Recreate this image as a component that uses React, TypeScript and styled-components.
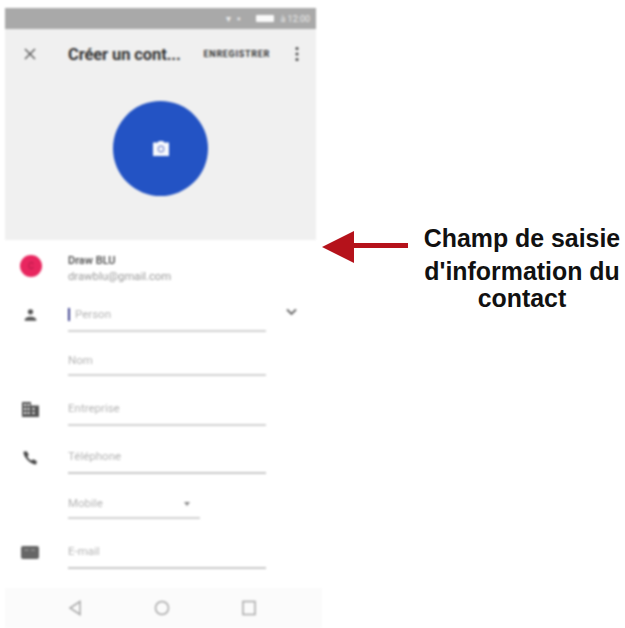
import React from "react";
import styled, { createGlobalStyle } from "styled-components";

const GlobalStyle = createGlobalStyle`
  html, body {
    margin: 0;
    padding: 0;
    background: #fff;
    font-family: "Roboto", "Liberation Sans", sans-serif;
  }
`;

const Page = styled.div`
  display: flex;
  align-items: flex-start;
  width: 625px;
  height: 628px;
  padding: 8px 0 0 5px;
  box-sizing: border-box;
  overflow: hidden;
`;

const Phone = styled.div`
  width: 311px;
  flex: none;
  filter: blur(1px);
`;

const StatusBar = styled.div`
  height: 21px;
  background: #a9a9a9;
  display: flex;
  align-items: center;
  justify-content: flex-end;
  gap: 6px;
  padding-right: 6px;
  color: #ececec;
  font-size: 9px;
`;

const StatusGlyph = styled.span`
  font-size: 10px;
`;

const Battery = styled.span`
  width: 18px;
  height: 7px;
  background: #fafafa;
  border-radius: 1px;
  margin-left: 10px;
`;

const Hero = styled.div`
  height: 211px;
  background: #f0f0f0;
  display: flex;
  flex-direction: column;
`;

const Toolbar = styled.div`
  height: 50px;
  display: flex;
  align-items: center;
  padding: 0 17px 0 18px;
`;

const Title = styled.div`
  margin-left: 31px;
  font-size: 16.5px;
  font-weight: 700;
  color: #333;
  white-space: nowrap;
  letter-spacing: -0.1px;
`;

const Save = styled.div`
  margin-left: auto;
  margin-right: 25px;
  font-size: 9px;
  font-weight: 700;
  color: #333;
  letter-spacing: 0.7px;
`;

const Photo = styled.div`
  width: 95px;
  height: 95px;
  margin: 22px auto 0;
  border-radius: 50%;
  background: #2353c4;
  display: flex;
  align-items: center;
  justify-content: center;
`;

const Account = styled.div`
  height: 51px;
  display: flex;
  align-items: center;
  gap: 26px;
  padding-left: 15px;
`;

const Avatar = styled.div`
  width: 22px;
  height: 22px;
  border-radius: 50%;
  background: #e8265f;
  display: flex;
  align-items: center;
  justify-content: center;
  color: #b01a48;
  font-size: 9px;
`;

const AccountText = styled.div`
  display: flex;
  flex-direction: column;
  gap: 3px;
  margin-top: 5px;
`;

const AccountName = styled.div`
  font-size: 11px;
  font-weight: 500;
  color: #444;
`;

const AccountMail = styled.div`
  font-size: 11.3px;
  color: #999;
`;

const Row = styled.div<{ $height: number }>`
  height: ${(p) => p.$height}px;
  display: flex;
  align-items: flex-end;
`;

const IconSlot = styled.div`
  width: 50px;
  height: 18px;
  flex: none;
  margin: 0 13px 8px 0;
  display: flex;
  align-items: center;
  justify-content: center;
`;

const Field = styled.div<{ $width: number; $strong?: boolean; $tight?: boolean }>`
  width: ${(p) => p.$width}px;
  box-sizing: border-box;
  border-bottom: 2px solid ${(p) => (p.$strong ? "#c8c8c8" : "#d2d2d2")};
  display: flex;
  align-items: center;
  justify-content: space-between;
  padding-bottom: ${(p) => (p.$tight ? 7 : 9)}px;
  font-size: 11.5px;
  line-height: 13px;
  color: #b4b4b4;
`;

const Caret = styled.span`
  width: 2px;
  height: 13px;
  background: #3f4390;
  margin-right: 5px;
`;

const Placeholder = styled.div`
  display: flex;
  align-items: center;
`;

const Chevron = styled.div`
  margin: 0 0 12px 20px;
  color: #666;
`;

const DropMark = styled.span`
  width: 0;
  height: 0;
  margin-right: 10px;
  border-left: 3px solid transparent;
  border-right: 3px solid transparent;
  border-top: 4px solid #888;
`;

const NavBar = styled.div`
  height: 40px;
  margin: 19px -6px 0 0;
  background: #fbfbfb;
  display: flex;
  align-items: center;
  justify-content: space-between;
  padding: 0 66px 0 63px;
  color: #a8a8a8;
`;

const Note = styled.div`
  display: flex;
  align-items: flex-start;
  margin-top: 215px;
  flex: 1;
  min-width: 0;
`;

const Arrow = styled.svg`
  flex: none;
  margin: 6px 0 0 5px;
  filter: blur(0.5px);
`;

const Caption = styled.div`
  width: 206px;
  flex: none;
  margin: 0 0 0 8px;
  text-align: center;
  font-family: "Liberation Sans", Arial, sans-serif;
  font-weight: 700;
  font-size: 24.9px;
  color: #111;
`;

const CaptionLine = styled.div<{ $height: number }>`
  height: ${(p) => p.$height}px;
  line-height: 30px;
  white-space: nowrap;
`;

const CloseIcon = () => (
  <svg width="14" height="14" viewBox="0 0 14 14" fill="none" stroke="#555" strokeWidth="1.4">
    <path d="M2 2l10 10M12 2L2 12" />
  </svg>
);

const MoreIcon = () => (
  <svg width="4" height="16" viewBox="0 0 4 16" fill="#444">
    <circle cx="2" cy="2.5" r="1.5" />
    <circle cx="2" cy="8" r="1.5" />
    <circle cx="2" cy="13.5" r="1.5" />
  </svg>
);

const CameraIcon = () => (
  <svg width="20" height="18" viewBox="0 0 20 18">
    <path fill="#f7f9fd" d="M6.5 2.5L8 1h4l1.5 1.5H18V16H2V2.5z" />
    <circle cx="10" cy="9" r="3.4" fill="#7f8fd0" />
    <circle cx="10" cy="9" r="2.2" fill="#f7f9fd" />
  </svg>
);

const PersonIcon = () => (
  <svg width="15" height="15" viewBox="0 0 16 16" fill="#555">
    <circle cx="8" cy="4" r="2.8" />
    <path d="M2 12c1-2 3.5-2.6 6-2.6s5 .6 6 2.6v1.5H2z" />
  </svg>
);

const BuildingIcon = () => (
  <svg width="19" height="17" viewBox="0 0 19 17" fill="#555">
    <path
      fillRule="evenodd"
      d="M1 1h9v3.5h8V16H1zm2 2v2h2V3zm3.5 0v2h2V3zM3 7v2h2V7zm3.5 0v2h2V7zM3 11v2h2v-2zm3.5 0v2h2v-2zm5-4v2h2V7zm0 4v2h2v-2z"
    />
  </svg>
);

const PhoneIcon = () => (
  <svg width="17" height="17" viewBox="0 0 24 24" fill="#484848">
    <path d="M6.6 3l3 5-2 2.5c1.2 2.6 3.3 4.7 5.9 5.9l2.5-2 5 3-1 4.6C12 22 2 12 2 4z" />
  </svg>
);

const MessageIcon = () => (
  <svg width="20" height="15" viewBox="0 0 20 15">
    <rect x="1" y="1" width="18" height="13" rx="2" fill="#666" />
    <path d="M4.5 5h4M11 5h4" stroke="#aaa" strokeWidth="1.2" />
  </svg>
);

const ChevronIcon = () => (
  <svg width="11" height="8" viewBox="0 0 11 8" fill="none" stroke="currentColor" strokeWidth="1.8">
    <path d="M1 1.5l4.5 4.5L10 1.5" />
  </svg>
);

const BackIcon = () => (
  <svg width="14" height="16" viewBox="0 0 14 16" fill="none" stroke="currentColor" strokeWidth="1.5">
    <path d="M12 1.5v13L2 8z" />
  </svg>
);

const HomeIcon = () => (
  <svg width="16" height="16" viewBox="0 0 16 16" fill="none" stroke="currentColor" strokeWidth="1.5">
    <circle cx="8" cy="8" r="6.5" />
  </svg>
);

const RecentIcon = () => (
  <svg width="14" height="16" viewBox="0 0 14 16" fill="none" stroke="currentColor" strokeWidth="1.5">
    <rect x="1" y="1.5" width="12" height="13" />
  </svg>
);

const App: React.FC = () => {
  return (
    <Page>
      <GlobalStyle />
      <Phone>
        <StatusBar>
          <StatusGlyph>▾</StatusGlyph>
          <StatusGlyph>▪</StatusGlyph>
          <Battery />
          <span>à 12:00</span>
        </StatusBar>
        <Hero>
          <Toolbar>
            <CloseIcon />
            <Title>Créer un cont...</Title>
            <Save>ENREGISTRER</Save>
            <MoreIcon />
          </Toolbar>
          <Photo>
            <CameraIcon />
          </Photo>
        </Hero>
        <Account>
          <Avatar>C</Avatar>
          <AccountText>
            <AccountName>Draw BLU</AccountName>
            <AccountMail>drawblu@gmail.com</AccountMail>
          </AccountText>
        </Account>
        <Row $height={41}>
          <IconSlot>
            <PersonIcon />
          </IconSlot>
          <Field $width={198}>
            <Placeholder>
              <Caret />
              Person
            </Placeholder>
          </Field>
          <Chevron>
            <ChevronIcon />
          </Chevron>
        </Row>
        <Row $height={44}>
          <IconSlot />
          <Field $width={198} $tight>Nom</Field>
        </Row>
        <Row $height={50}>
          <IconSlot>
            <BuildingIcon />
          </IconSlot>
          <Field $width={198}>Entreprise</Field>
        </Row>
        <Row $height={48}>
          <IconSlot>
            <PhoneIcon />
          </IconSlot>
          <Field $width={198} $strong>Téléphone</Field>
        </Row>
        <Row $height={45}>
          <IconSlot />
          <Field $width={132} $tight>
            Mobile
            <DropMark />
          </Field>
        </Row>
        <Row $height={50}>
          <IconSlot>
            <MessageIcon />
          </IconSlot>
          <Field $width={198} $strong>E-mail</Field>
        </Row>
        <NavBar>
          <BackIcon />
          <HomeIcon />
          <RecentIcon />
        </NavBar>
      </Phone>
      <Note>
        <Arrow width="90" height="36" viewBox="0 0 90 36">
          <path d="M1 18L33 2v12h54v5H33v15z" fill="#b5121b" />
        </Arrow>
        <Caption>
          <CaptionLine $height={33}>Champ de saisie</CaptionLine>
          <CaptionLine $height={27}>d'information du</CaptionLine>
          <CaptionLine $height={30}>contact</CaptionLine>
        </Caption>
      </Note>
    </Page>
  );
};

export default App;
